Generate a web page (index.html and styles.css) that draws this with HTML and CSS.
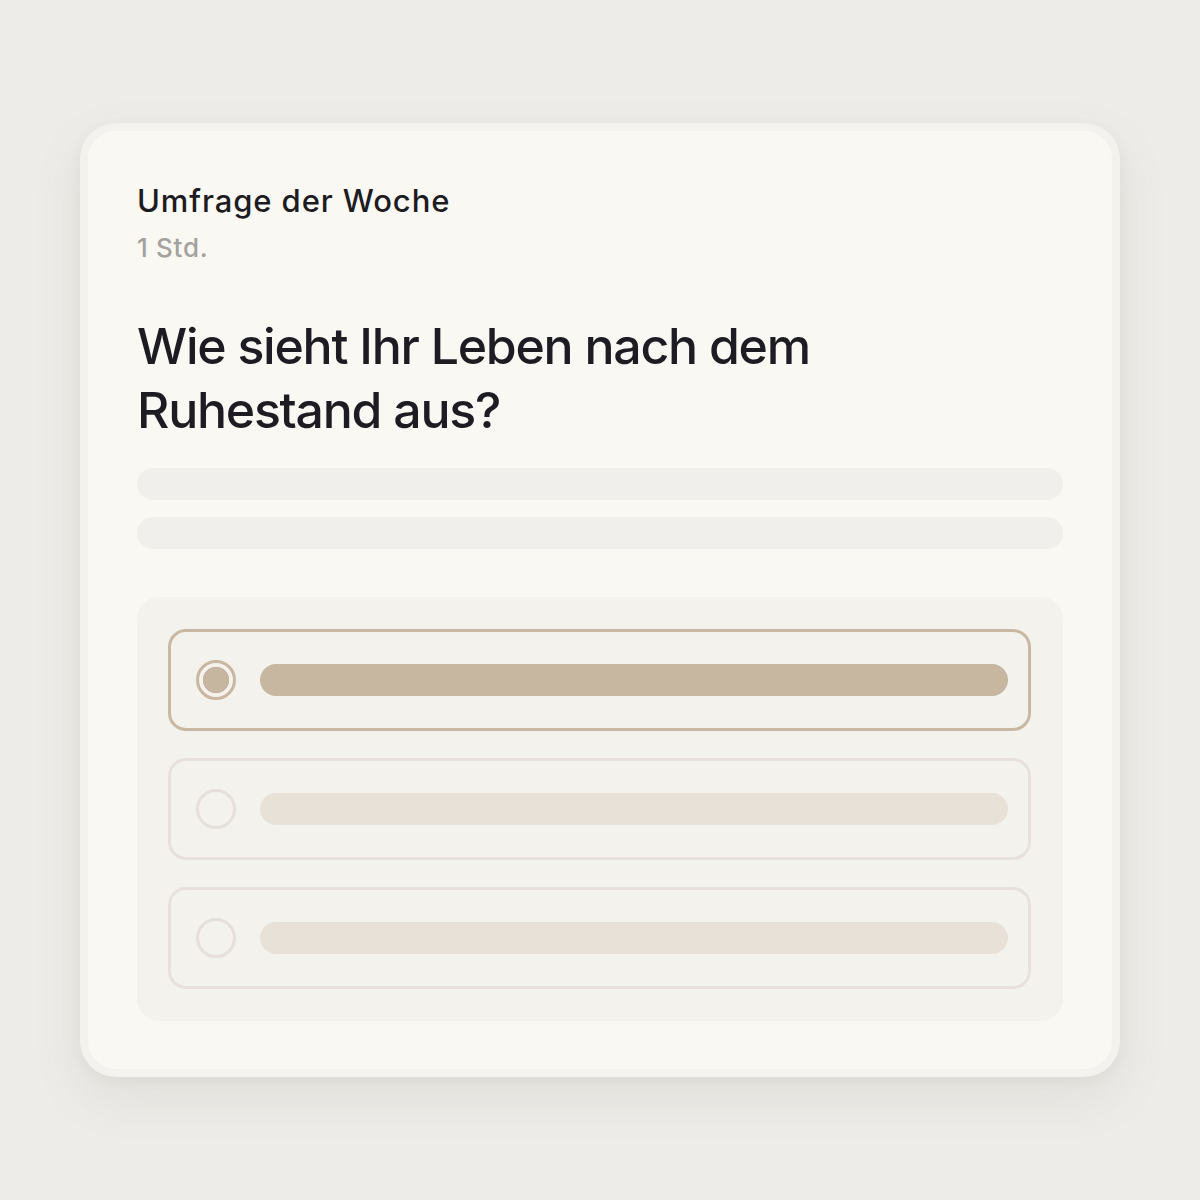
FILE: index.html
```html
<!DOCTYPE html>
<html lang="de">
<head>
<meta charset="utf-8">
<link rel="stylesheet" href="styles.css">
</head>
<body>
<div class="stage">
  <div class="card">
    <div class="card-inner">
      <div class="kicker">Umfrage der Woche</div>
      <div class="time">1 Std.</div>
      <h1 class="question">Wie sieht Ihr Leben nach dem<br>Ruhestand aus?</h1>
      <div class="skeleton"></div>
      <div class="skeleton second"></div>
      <div class="options">
        <div class="option selected">
          <span class="radio"></span>
          <span class="bar"></span>
        </div>
        <div class="option">
          <span class="radio"></span>
          <span class="bar"></span>
        </div>
        <div class="option">
          <span class="radio"></span>
          <span class="bar"></span>
        </div>
      </div>
    </div>
  </div>
</div>
</body>
</html>
```
FILE: styles.css
```css
html, body {
  margin: 0;
  padding: 0;
}
body {
  width: 1200px;
  height: 1200px;
  background: #edece8;
  font-family: "Inter", "Lato", sans-serif;
  overflow: hidden;
}
.stage {
  padding: 123px 80px 0 80px;
}
.card {
  width: 1040px;
  height: 954px;
  box-sizing: border-box;
  padding: 8px;
  border-radius: 36px;
  background: #f3f2ee;
  box-shadow: 0 20px 50px rgba(120, 110, 95, 0.10), 0 4px 12px rgba(120, 110, 95, 0.06);
}
.card-inner {
  height: 100%;
  box-sizing: border-box;
  background: #faf8f3;
  border-radius: 28px;
  padding: 50px 49px 0 49px;
}
.kicker {
  font-size: 31px;
  font-weight: 500;
  color: #1c1c22;
  line-height: 40px;
  letter-spacing: 0.9px;
}
.time {
  font-size: 26px;
  font-weight: 500;
  color: #a3a2a0;
  line-height: 34px;
  margin-top: 10px;
  letter-spacing: 0.7px;
}
.question {
  margin: 49px 0 0 0;
  font-size: 50px;
  font-weight: 500;
  color: #1c1c22;
  line-height: 64px;
  letter-spacing: -1.25px;
}
.skeleton {
  margin-top: 26px;
  height: 32px;
  border-radius: 16px;
  background: #f1efeb;
}
.skeleton.second {
  margin-top: 17px;
}
.options {
  margin-top: 48px;
  background: #f4f2ed;
  border-radius: 22px;
  padding: 32px 32px 32px 31px;
  display: flex;
  flex-direction: column;
  gap: 27px;
}
.option {
  height: 102px;
  box-sizing: border-box;
  border: 3px solid #e6e2db;
  border-radius: 18px;
  display: flex;
  align-items: center;
  padding: 0 20px 0 25px;
  gap: 24px;
}
.radio {
  width: 40px;
  height: 40px;
  box-sizing: border-box;
  border-radius: 50%;
  border: 3px solid #e5e0d9;
  flex: none;
}
.bar {
  flex: 1;
  height: 32px;
  border-radius: 16px;
  background: #e8e1d8;
}
.option.selected {
  border-color: #c9b9a3;
}
.option.selected .radio {
  border-color: #c8b8a2;
  background: radial-gradient(circle, #c6b6a0 0 13px, #f5f2ed 13.5px);
}
.option.selected .bar {
  background: #c7b7a1;
}
```
